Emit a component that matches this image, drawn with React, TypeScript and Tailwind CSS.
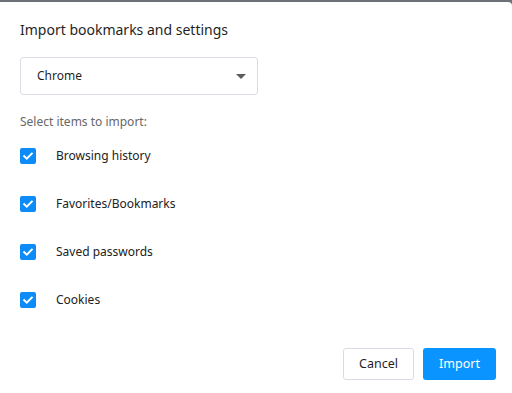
import { useState } from 'react'

const items = ['Browsing history', 'Favorites/Bookmarks', 'Saved passwords', 'Cookies']

function Check({ checked }: { checked: boolean }) {
  return (
    <span
      className={`flex h-4 w-4 items-center justify-center rounded-[2px] ${
        checked ? 'bg-[#0d8cf8]' : 'border border-[#8a8a8a] bg-white'
      }`}
    >
      {checked && (
        <svg width="12" height="12" viewBox="0 0 12 12" fill="none">
          <path d="M2.2 6.2 L4.8 8.7 L9.8 3.6" stroke="white" strokeWidth="2" strokeLinecap="square" />
        </svg>
      )}
    </span>
  )
}

export default function App() {
  const [checked, setChecked] = useState(items.map(() => true))

  return (
    <div className="h-[393px] w-[512px] bg-[#6d7176] pt-[2px] font-['Noto_Sans',sans-serif]">
      <div className="flex h-[391px] flex-col rounded-tr-[4px] bg-white px-5">
        <h1 className="mt-[18px] text-[14px] leading-5 text-[#1f1f1f]">Import bookmarks and settings</h1>

        {/* Browser picker */}
        <button className="mt-[17px] flex h-[38px] w-[238px] items-center justify-between rounded-[3px] border border-[#dadde3] bg-white pl-4 pr-[11px] text-[12px] text-[#1f1f1f]">
          <span>Chrome</span>
          <svg width="10" height="5" viewBox="0 0 10 5">
            <path d="M0 0 L10 0 L5 5 Z" fill="#5c5c5c" />
          </svg>
        </button>

        <p className="mt-[19px] text-[12px] leading-4 text-[#676767]">Select items to import:</p>

        <div className="mt-[18px] flex flex-col gap-8">
          {items.map((label, i) => (
            <label
              key={label}
              className="flex h-4 cursor-pointer items-center gap-5 text-[12px] text-[#222]"
              onClick={() => setChecked(c => c.map((v, j) => (j === i ? !v : v)))}
            >
              <Check checked={checked[i]} />
              <span>{label}</span>
            </label>
          ))}
        </div>

        <div className="mt-auto mb-[13px] flex justify-end gap-[9px]">
          <button className="h-[32px] w-[71px] rounded-[3px] border border-[#d7dce4] bg-white text-[12.5px] text-[#1f1f1f]">
            Cancel
          </button>
          <button className="mr-[-4px] h-[32px] w-[73px] rounded-[3px] bg-[#0a94ff] text-[12.5px] text-white">
            Import
          </button>
        </div>
      </div>
    </div>
  )
}
